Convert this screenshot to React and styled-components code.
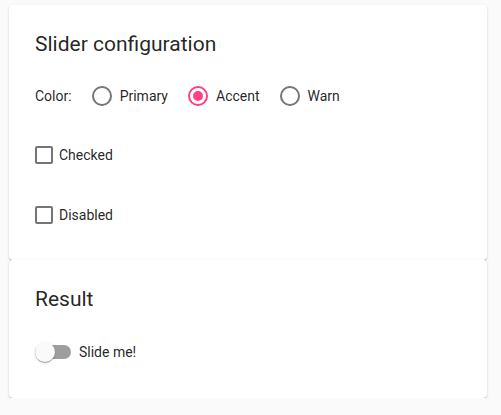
import React from 'react'
import styled, { createGlobalStyle } from 'styled-components'

const Global = createGlobalStyle`
    body {
        margin: 0;
        background: #fafafa;
        font-family: Roboto, "Liberation Sans", sans-serif;
        color: rgba(0, 0, 0, 0.87);
    }
`

const Page = styled.div`
    display: flex;
    flex-direction: column;
    width: 478px;
    padding: 5px 0 0 9px;
`

const Card = styled.div`
    position: relative;
    display: flex;
    flex-direction: column;
    background: #fff;
    border-radius: 4px;
    padding: ${p => p.$pad};
    box-shadow: 0 2px 1px -1px rgba(0, 0, 0, 0.2), 0 1px 1px 0 rgba(0, 0, 0, 0.14), 0 1px 3px 0 rgba(0, 0, 0, 0.12);
`

const Title = styled.h2`
    margin: 0;
    font-size: 21px;
    font-weight: 400;
    line-height: 24px;
`

const Row = styled.div`
    display: flex;
    align-items: center;
    height: ${p => p.$h || 40}px;
    margin-top: ${p => p.$mt}px;
    font-size: 14px;
`

const Label = styled.span`
    margin-right: 20px;
`

const RadioItem = styled.label`
    display: flex;
    align-items: center;
    gap: 8px;
    margin-right: 20px;
`

const RadioCircle = styled.span`
    box-sizing: border-box;
    width: 20px;
    height: 20px;
    border-radius: 50%;
    border: 2px solid ${p => (p.$on ? '#ff4081' : 'rgba(0, 0, 0, 0.54)')};
    display: flex;
    align-items: center;
    justify-content: center;

    &::after {
        content: '';
        width: 10px;
        height: 10px;
        border-radius: 50%;
        background: #ff4081;
        display: ${p => (p.$on ? 'block' : 'none')};
    }
`

const CheckItem = styled.label`
    display: flex;
    align-items: center;
    gap: 6px;
`

const Box = styled.span`
    box-sizing: border-box;
    width: 18px;
    height: 18px;
    border: 2px solid rgba(0, 0, 0, 0.54);
    border-radius: 2px;
`

const Toggle = styled.span`
    position: relative;
    width: 36px;
    height: 14px;
    border-radius: 8px;
    background: rgba(0, 0, 0, 0.38);
    margin-right: 8px;

    &::after {
        content: '';
        position: absolute;
        left: 0;
        top: -3px;
        width: 20px;
        height: 20px;
        border-radius: 50%;
        background: #fafafa;
        box-shadow: 0 2px 1px -1px rgba(0, 0, 0, 0.2), 0 1px 1px 0 rgba(0, 0, 0, 0.14), 0 1px 3px 0 rgba(0, 0, 0, 0.12);
    }
`

const colors = [
    { name: 'Primary', on: false },
    { name: 'Accent', on: true },
    { name: 'Warn', on: false },
]

export default function App() {
    return (
        <Page>
            <Global />
            <Card $pad="27px 26px 25px">
                <Title>Slider configuration</Title>
                <Row $mt={20}>
                    <Label>Color:</Label>
                    {colors.map(c => (
                        <RadioItem key={c.name}>
                            <RadioCircle $on={c.on} />
                            {c.name}
                        </RadioItem>
                    ))}
                </Row>
                <Row $mt={19}>
                    <CheckItem><Box />Checked</CheckItem>
                </Row>
                <Row $mt={20}>
                    <CheckItem><Box />Disabled</CheckItem>
                </Row>
            </Card>
            <Card $pad="27px 26px 34px">
                <Title>Result</Title>
                <Row $mt={29} $h={24}>
                    <Toggle />
                    Slide me!
                </Row>
            </Card>
        </Page>
    )
}
